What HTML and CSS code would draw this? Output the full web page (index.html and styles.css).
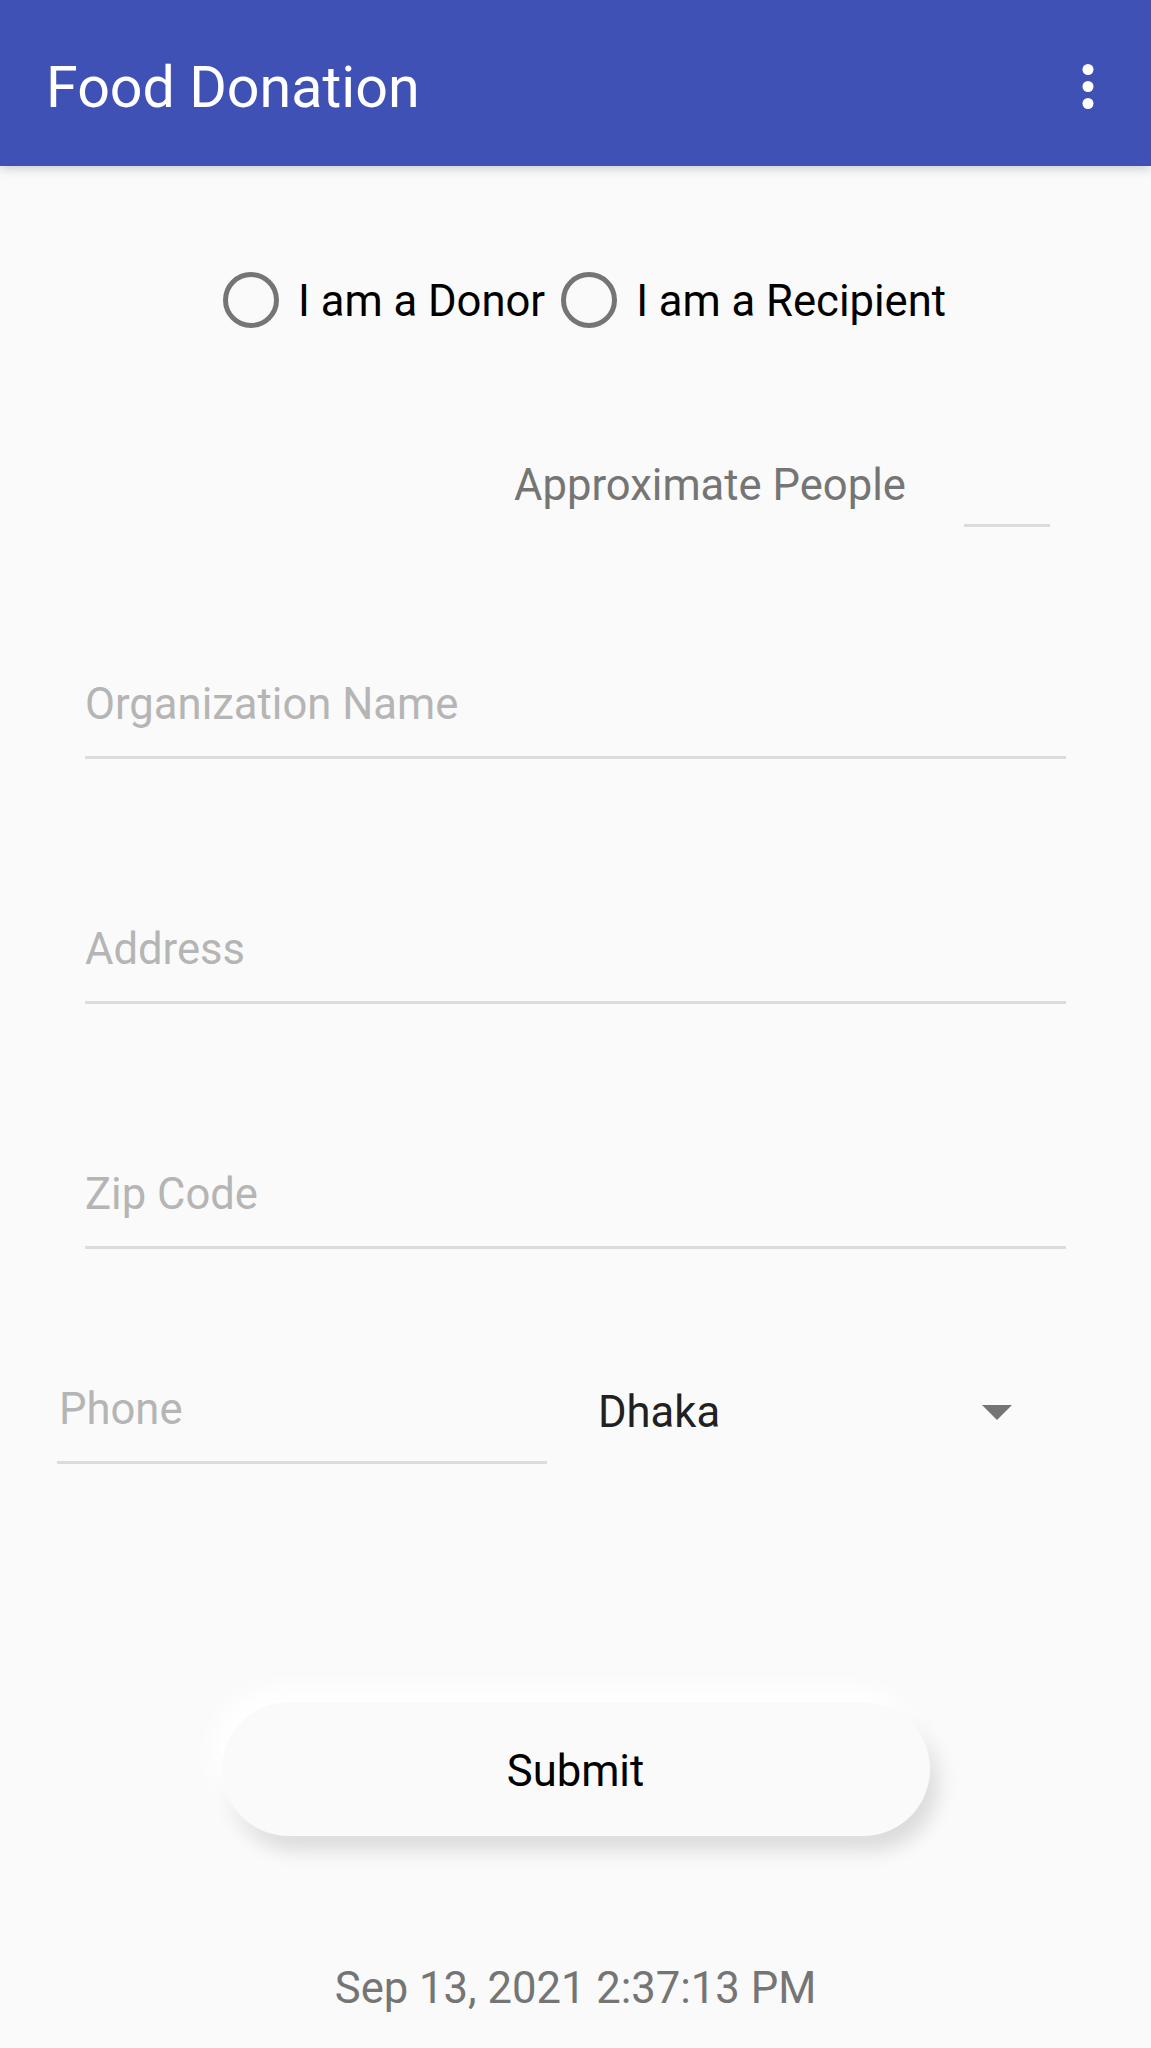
FILE: index.html
```html
<!DOCTYPE html>
<html lang="en">
<head>
<meta charset="utf-8">
<title>Food Donation</title>
<link rel="stylesheet" href="styles.css">
</head>
<body>
<header class="appbar">
  <div class="appbar-title">Food Donation</div>
  <svg class="menu-dots" width="12" height="46" viewBox="0 0 12 46" aria-label="More options">
    <circle cx="6" cy="5.5" r="5.5" fill="#fff"/>
    <circle cx="6" cy="22.5" r="5.5" fill="#fff"/>
    <circle cx="6" cy="39.5" r="5.5" fill="#fff"/>
  </svg>
</header>
<main class="content">
  <div class="radio-row">
    <label class="radio"><span class="radio-circle"></span><span class="radio-label">I am a Donor</span></label>
    <label class="radio"><span class="radio-circle"></span><span class="radio-label">I am a Recipient</span></label>
  </div>

  <div class="people-row">
    <span class="people-label">Approximate People</span>
    <span class="people-input"></span>
  </div>

  <div class="field field-first"><span class="hint">Organization Name</span></div>
  <div class="field"><span class="hint">Address</span></div>
  <div class="field"><span class="hint">Zip Code</span></div>

  <div class="phone-row">
    <div class="phone-field"><span class="hint">Phone</span></div>
    <div class="spinner">
      <span class="spinner-value">Dhaka</span>
      <span class="spinner-arrow"></span>
    </div>
  </div>

  <div class="submit-wrap">
    <button class="submit" type="button">Submit</button>
  </div>

  <div class="timestamp">Sep 13, 2021 2:37:13 PM</div>
</main>
</body>
</html>
```
FILE: styles.css
```css
html {
  background: #fafafa;
}
body {
  margin: 0;
  background: #fafafa;
  font-family: Roboto, "Liberation Sans", sans-serif;
  color: #212121;
  min-height: 2048px;
}
.appbar {
  position: relative;
  z-index: 2;
  height: 166px;
  box-sizing: border-box;
  background: #3f51b5;
  display: flex;
  justify-content: space-between;
  align-items: flex-start;
  padding: 60px 57px 0 46px;
  box-shadow: 0 3px 10px rgba(0, 0, 0, 0.18);
}
.appbar-title {
  color: #ffffff;
  font-size: 57.4px;
  line-height: 56px;
  font-weight: 400;
}
.menu-dots {
  margin-top: 3.5px;
  display: block;
}
.content {
  display: flex;
  flex-direction: column;
}
.radio-row {
  display: flex;
  margin: 106px 0 0 223px;
  gap: 16px;
}
.radio {
  display: flex;
  align-items: flex-start;
}
.radio-circle {
  width: 56px;
  height: 56px;
  box-sizing: border-box;
  border: 5px solid #757575;
  border-radius: 50%;
  flex: none;
}
.radio-label {
  margin-left: 19px;
  margin-top: 2px;
  font-size: 43.6px;
  line-height: 56px;
  color: #000000;
}
.people-row {
  display: flex;
  align-items: flex-start;
  margin: 131px 0 0 514px;
}
.people-label {
  width: 450px;
  font-size: 43.6px;
  line-height: 50px;
  color: #757575;
}
.people-input {
  width: 86px;
  height: 63px;
  border-bottom: 3px solid #dcdcdc;
}
.field {
  margin: 166px 0 0 85px;
  width: 981px;
  padding-bottom: 26px;
  border-bottom: 3px solid #dcdcdc;
}
.field-first {
  margin-top: 153px;
}
.hint {
  display: block;
  font-size: 43.6px;
  line-height: 50px;
  color: #b5b5b5;
}
.phone-row {
  display: flex;
  align-items: flex-start;
  margin: 136px 0 0 57px;
}
.phone-field {
  width: 490px;
  box-sizing: border-box;
  padding: 0 0 26px 0;
  border-bottom: 3px solid #dcdcdc;
}
.phone-field .hint {
  margin-left: 2px;
}
.spinner {
  margin-left: 51px;
  width: 414px;
  display: flex;
  align-items: flex-start;
  justify-content: space-between;
}
.spinner-value {
  font-size: 43.6px;
  line-height: 50px;
  padding-top: 3px;
  color: #212121;
}
.spinner-arrow {
  margin-top: 20px;
  width: 0;
  height: 0;
  border-left: 15px solid transparent;
  border-right: 15px solid transparent;
  border-top: 15px solid #757575;
}
.submit-wrap {
  display: flex;
  justify-content: center;
  margin-top: 238px;
}
.submit {
  width: 708px;
  height: 134px;
  box-sizing: border-box;
  padding: 6px 0 0 0;
  border: none;
  border-radius: 67px;
  background: #fafafa;
  font-family: Roboto, "Liberation Sans", sans-serif;
  font-size: 43.6px;
  line-height: 128px;
  color: #000000;
  box-shadow: -10px -14px 24px #ffffff, 8px 14px 20px rgba(0, 0, 0, 0.13);
}
.timestamp {
  margin-top: 128px;
  text-align: center;
  font-size: 43.6px;
  line-height: 50px;
  color: #757575;
}
```
